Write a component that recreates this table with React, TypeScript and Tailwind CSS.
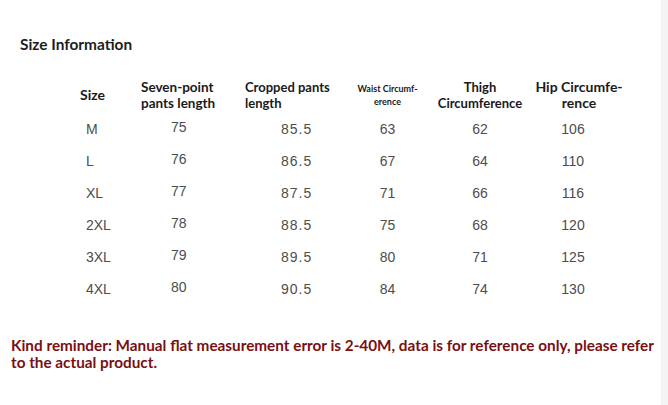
const headers = [
  { key: 'size', lines: ['Size'], cls: 'text-center text-[14px]' },
  { key: 'seven', lines: ['Seven-point', 'pants length'], cls: 'pl-[16px] text-left text-[13.5px]' },
  { key: 'cropped', lines: ['Cropped pants', 'length'], cls: 'pl-[5px] text-left text-[13px]' },
  { key: 'waist', lines: ['Waist Circumf-', 'erence'], cls: 'text-center text-[9px] leading-[13px]' },
  { key: 'thigh', lines: ['Thigh', 'Circumference'], cls: 'text-center text-[13px]' },
  { key: 'hip', lines: ['Hip Circumfe-', 'rence'], cls: 'pl-[3px] text-center text-[14px]' },
];

const rows = [
  ['M', '75', '85.5', '63', '62', '106'],
  ['L', '76', '86.5', '67', '64', '110'],
  ['XL', '77', '87.5', '71', '66', '116'],
  ['2XL', '78', '88.5', '75', '68', '120'],
  ['3XL', '79', '89.5', '80', '71', '125'],
  ['4XL', '80', '90.5', '84', '74', '130'],
];

// per-column placement of the data cells
const cellCls = [
  'pl-[26px] text-left',
  'pl-[46px] text-left -translate-y-[2px]',
  'pl-[41px] text-left tracking-[1px]',
  'text-center',
  'text-center',
  'pr-[9px] text-center',
];

export default function App() {
  return (
    <div className="flex h-[405px] w-[668px] bg-white">
      <div className="flex-1 pt-[34px]">
        <h1 className="pl-[20px] text-[15.4px] leading-[20px] font-bold text-[#1e1e1e] [font-family:Lato,'Liberation_Sans',sans-serif]">
          Size Information
        </h1>

        <div className="ml-[60px] mt-[23px] grid w-[570px] grid-cols-[65px_115px_100px_95px_90px_105px]">
          {/* Header row */}
          {headers.map((h) => (
            <div
              key={h.key}
              className={`flex h-[36px] flex-col justify-center font-bold text-[#1a1a1a] [font-family:Lato,'Liberation_Sans',sans-serif] ${h.cls}`}
            >
              {h.lines.map((l) => (
                <span key={l} className={h.key === 'waist' ? '' : 'leading-[16px]'}>
                  {l}
                </span>
              ))}
            </div>
          ))}

          {/* Data rows */}
          {rows.map((r) =>
            r.map((v, i) => (
              <div
                key={r[0] + i}
                className={`flex h-[32px] items-center text-[14px] text-[#4d4d4d] [font-family:'Liberation_Sans',Arial,sans-serif] ${i >= 3 ? 'justify-center' : ''} ${cellCls[i]}`}
              >
                <span>{v}</span>
              </div>
            )),
          )}
        </div>

        <p className="mt-[32px] pl-[11px] pr-[4px] text-[15.3px] leading-[17px] font-bold text-[#7a0f12] [font-family:Lato,'Liberation_Sans',sans-serif]">
          Kind reminder: Manual flat measurement error is 2-40M, data is for reference only, please refer to the actual product.
        </p>
      </div>
      <div className="w-[7px] bg-[#f4f4f4]" />
    </div>
  );
}
